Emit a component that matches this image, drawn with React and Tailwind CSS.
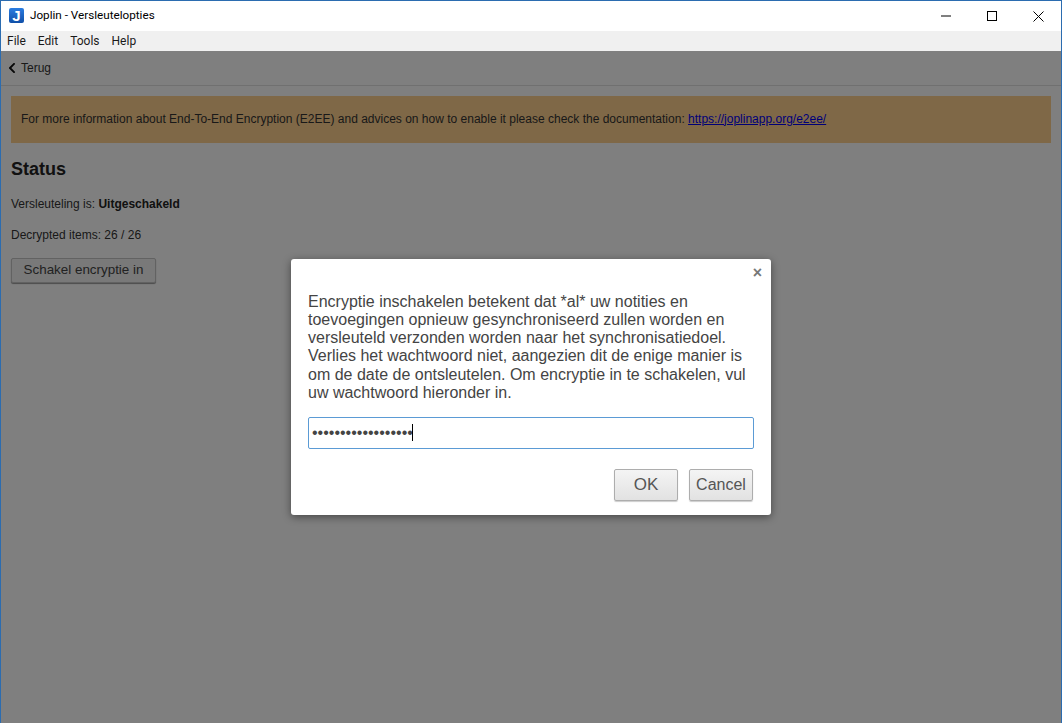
import { FaChevronLeft } from "react-icons/fa";

const sans = "font-['Liberation_Sans',Arial,sans-serif]";
const ui = "font-['Roboto','Noto_Sans',sans-serif]";

function WindowControls() {
  return (
    <div className="flex items-center h-full text-black">
      <div className="w-[46px] h-full flex items-center justify-center">
        <svg width="10" height="10" viewBox="0 0 10 10"><path d="M0 5h10" stroke="currentColor" strokeWidth="1" /></svg>
      </div>
      <div className="w-[46px] h-full flex items-center justify-center">
        <svg width="10" height="10" viewBox="0 0 10 10"><rect x="0.5" y="0.5" width="9" height="9" fill="none" stroke="currentColor" /></svg>
      </div>
      <div className="w-[46px] h-full flex items-center justify-center">
        <svg width="11" height="11" viewBox="0 0 11 11"><path d="M0.5 0.5l10 10M10.5 0.5l-10 10" stroke="currentColor" /></svg>
      </div>
    </div>
  );
}

function Button({ children, className }) {
  return (
    <button className={`h-8 border border-[#adadad] bg-gradient-to-b from-[#f4f4f4] to-[#e2e2e2] rounded-[2px] shadow-[0_1px_1px_rgba(0,0,0,0.2)] text-[16px] text-[#555] ${className}`}>
      {children}
    </button>
  );
}

export default function App() {
  return (
    <div className={`relative w-[1062px] h-[723px] overflow-hidden flex flex-col bg-white border border-[#2b6cb0] border-b-0 ${sans}`}>
      {/* title bar */}
      <div className="h-[30px] flex items-center justify-between bg-white shrink-0">
        <div className="flex items-center pl-2">
          <div className="w-[15px] h-[15px] rounded-[2px] bg-gradient-to-b from-[#2a7de1] to-[#0f4fa8] flex items-center justify-center text-white font-bold text-[15px] leading-none">J</div>
          <span className={`ml-[6px] text-[11.7px] text-black ${ui}`}>Joplin - Versleutelopties</span>
        </div>
        <WindowControls />
      </div>

      {/* menu */}
      <div className={`h-[20px] bg-[#f0f0f0] flex items-center pl-[6px] gap-[12px] text-[12px] text-[#1a1a1a] shrink-0 ${ui}`}>
        <span>File</span>
        <span>Edit</span>
        <span>Tools</span>
        <span>Help</span>
      </div>

      {/* page */}
      <div className="relative flex-1 bg-white">
        <div className="h-[35px] border-b border-[#e0e0e0] flex items-center pl-[5px] text-[12px] text-[#333]">
          <FaChevronLeft className="text-[12px] text-[#111]" />
          <span className="ml-[3px]">Terug</span>
        </div>
        <div className="px-[10px] pt-[10px]">
          <div className="h-[47px] bg-[#ffd08e] flex items-center px-[10px] pb-[2px] text-[12px] text-[#333]">
            <span>
              For more information about End-To-End Encryption (E2EE) and advices on how to enable it please check the documentation:{" "}
              <a href="#" className="underline text-[#0000ee]">https://joplinapp.org/e2ee/</a>
            </span>
          </div>
          <h1 className="mt-[16px] text-[18px] leading-[21px] font-bold text-[#222]">Status</h1>
          <p className="mt-[17px] text-[12px] leading-[14px] text-[#333]">
            Versleuteling is: <strong className="text-[#222]">Uitgeschakeld</strong>
          </p>
          <p className="mt-[17px] text-[12px] leading-[14px] text-[#333]">Decrypted items: 26 / 26</p>
          <button className="mt-[16px] h-[25px] w-[145px] border border-[#c4c4c4] bg-[#f2f2f2] rounded-[2px] shadow-[0_1px_1px_rgba(0,0,0,0.4)] text-[13.4px] text-[#444]">
            Schakel encryptie in
          </button>
        </div>

        {/* overlay */}
        <div className="absolute inset-0 bg-black/50" />
      </div>

      {/* dialog */}
      <div className="absolute left-[290px] top-[258px] w-[480px] h-[256px] bg-white rounded-[3px] shadow-[0_2px_8px_rgba(0,0,0,0.45)] px-[17px] pt-[34px] flex flex-col">
        <span className="absolute right-[9px] top-[5px] text-[16px] font-bold text-[#777] leading-[18px]">×</span>
        <p className="text-[16px] leading-[18.15px] text-[#444]">
          Encryptie inschakelen betekent dat *al* uw notities en<br />
          toevoegingen opnieuw gesynchroniseerd zullen worden en<br />
          versleuteld verzonden worden naar het synchronisatiedoel.<br />
          Verlies het wachtwoord niet, aangezien dit de enige manier is<br />
          om de date de ontsleutelen. Om encryptie in te schakelen, vul<br />
          uw wachtwoord hieronder in.
        </p>
        <div className="relative mt-[15.1px]">
          <input
            type="password"
            readOnly
            value="aaaaaaaaaaaaaaaaaa"
            className="w-full h-8 border border-[#5b9bd5] rounded-[2px] pl-[3px] text-[16px] text-[#444] outline-none caret-transparent"
          />
          <span className="absolute left-[104px] top-[7px] w-px h-[17px] bg-black" />
        </div>
        <div className="mt-[20px] flex justify-end gap-[11px] pr-px">
          <Button className="w-[64px] text-[17px]">OK</Button>
          <Button className="w-[64px]">Cancel</Button>
        </div>
      </div>
    </div>
  );
}
